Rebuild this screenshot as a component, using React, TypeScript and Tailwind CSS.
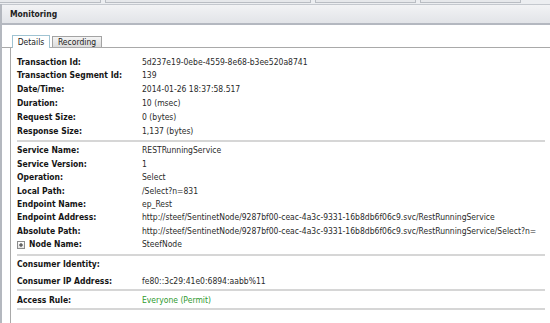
import React from "react";

const font = { fontFamily: '"DejaVu Sans Condensed", "DejaVu Sans", Tahoma, Verdana, sans-serif' };

type Row = { label: string; value?: string; green?: boolean; plus?: boolean };

const g1: Row[] = [
  { label: "Transaction Id:", value: "5d237e19-0ebe-4559-8e68-b3ee520a8741" },
  { label: "Transaction Segment Id:", value: "139" },
  { label: "Date/Time:", value: "2014-01-26 18:37:58.517" },
  { label: "Duration:", value: "10 (msec)" },
  { label: "Request Size:", value: "0 (bytes)" },
  { label: "Response Size:", value: "1,137 (bytes)" },
];

const g2: Row[] = [
  { label: "Service Name:", value: "RESTRunningService" },
  { label: "Service Version:", value: "1" },
  { label: "Operation:", value: "Select" },
  { label: "Local Path:", value: "/Select?n=831" },
  { label: "Endpoint Name:", value: "ep_Rest" },
  { label: "Endpoint Address:", value: "http://steef/SentinetNode/9287bf00-ceac-4a3c-9331-16b8db6f06c9.svc/RestRunningService" },
  { label: "Absolute Path:", value: "http://steef/SentinetNode/9287bf00-ceac-4a3c-9331-16b8db6f06c9.svc/RestRunningService/Select?n=" },
  { label: "Node Name:", value: "SteefNode", plus: true },
];

function Plus() {
  return (
    <span className="mr-[4px] inline-flex h-[8px] w-[8px] items-center justify-center border border-[#8c8c8c] bg-gradient-to-b from-[#ffffff] to-[#e4e4e4]">
      <svg width="6" height="6" viewBox="0 0 6 6">
        <path d="M3 1V5M1 3H5" stroke="#333" strokeWidth="1" />
      </svg>
    </span>
  );
}

function R({ r, h }: { r: Row; h: string }) {
  return (
    <div className={`flex items-center whitespace-nowrap ${h}`}>
      <div className="flex w-[125px] shrink-0 items-center font-bold text-[#151515]">
        {r.plus && <Plus />}
        {r.label}
      </div>
      <div className={r.green ? "text-[#2f9a2f]" : "text-[#2a2a2a]"}>{r.value}</div>
    </div>
  );
}

function Sep() {
  return <div className="h-[2px] w-[528px] bg-[#d6d6d6]" />;
}

export default function App() {
  return (
    <div className="h-[323px] w-[550px] overflow-hidden bg-white text-[8.5px] leading-none" style={font}>
      {/* top strip */}
      <div className="flex h-[4px] bg-[#eceef1]">
        <div className="h-[3px] w-[101px] border-b border-r border-[#b9bdc3] bg-[#e6e8eb]" />
        <div className="ml-[4px] h-[3px] w-[206px] border-b border-l border-r border-[#b9bdc3] bg-[#e6e8eb]" />
        <div className="ml-[4px] h-[3px] w-[101px] border-b border-l border-r border-[#b9bdc3] bg-[#e6e8eb]" />
        <div className="ml-[4px] h-[3px] w-[101px] border-b border-l border-r border-[#b9bdc3] bg-[#e6e8eb]" />
      </div>
      <div className="flex h-[319px] flex-col border-l-2 border-[#b4b8bf]">
        {/* header */}
        <div className="flex h-[21px] items-center border-b-2 border-t border-b-[#b4b8c0] border-t-[#c4c8ce] bg-gradient-to-b from-[#f2f3f5] to-[#e2e4e8] pl-[8px] text-[8.5px] font-bold text-[#222]">
          Monitoring
        </div>
        {/* tabs */}
        <div className="mt-[11px] flex h-[12px] items-end border-b border-[#a9a9a9] pl-[10px]">
          <div className="relative top-[1px] flex h-[13px] w-[38px] items-center justify-center border border-b-0 border-[#9fc3d2] bg-white text-[#222]">
            Details
          </div>
          <div className="ml-[2px] flex h-[11px] w-[50px] items-center justify-center border border-b-0 border-[#a3a3a3] bg-gradient-to-b from-[#f4f4f4] to-[#dcdcdc] text-[#222]">
            Recording
          </div>
        </div>
        {/* content */}
        <div className="ml-[8px] flex-1 border-l border-[#a9a9a9] pl-[6px] pt-[7px]">
          {g1.map((r) => (
            <R key={r.label} r={r} h="h-[13.8px]" />
          ))}
          <div className="mt-[2px]" />
          <Sep />
          <div className="mt-[2px]" />
          {g2.map((r) => (
            <R key={r.label} r={r} h="h-[13.45px]" />
          ))}
          <div className="mt-[3px]" />
          <Sep />
          <div className="mt-[1px]" />
          <R r={{ label: "Consumer Identity:", value: "" }} h="h-[14px]" />
          <div className="mt-[3px]" />
          <R r={{ label: "Consumer IP Address:", value: "fe80::3c29:41e0:6894:aabb%11" }} h="h-[14px]" />
          <div className="mt-[1px]" />
          <Sep />
          <div className="mt-[1px]" />
          <R r={{ label: "Access Rule:", value: "Everyone (Permit)", green: true }} h="h-[15px]" />
          <div className="mt-[1px]" />
          <Sep />
        </div>
      </div>
    </div>
  );
}
